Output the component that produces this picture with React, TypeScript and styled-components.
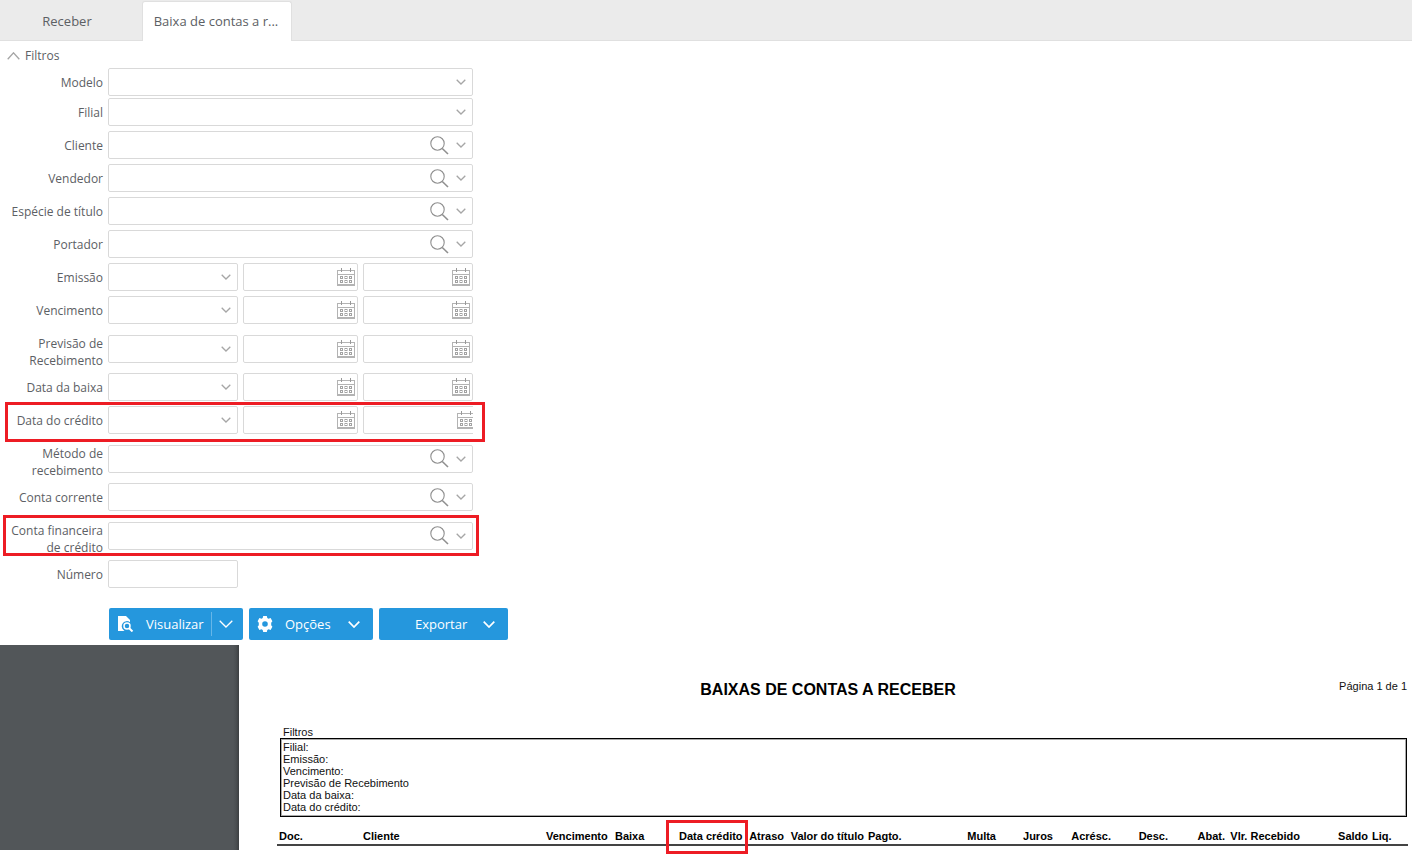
import React from 'react';
import styled, { createGlobalStyle, css } from 'styled-components';

const GlobalStyle = createGlobalStyle`
  * { box-sizing: border-box; }
  body { margin: 0; background: #fff; }
  body, button, input, select {
    font-family: "Open Sans", "Noto Sans", sans-serif;
    font-size: 13px;
    line-height: 17px;
    color: #5c6064;
  }
  button { border: 0; padding: 0; background: none; cursor: pointer; }
`;

const Page = styled.div`
  min-height: 100vh;
`;

const TabBar = styled.nav`
  display: flex;
  align-items: flex-end;
  height: 41px;
  background: #ebebeb;
  border-bottom: 1px solid #e0e0e0;
`;

const Tab = styled.button<{ $active?: boolean }>`
  height: 38px;
  width: 142px;
  padding-right: 8px;
  white-space: nowrap;
  ${p => p.$active && css`
    width: 150px;
    height: 40px;
    padding: 0 2px 0 0;
    margin-bottom: -1px;
    background: #fff;
    border: 1px solid #e0e0e0;
    border-bottom: 0;
    border-radius: 3px 3px 0 0;
  `}
`;

const Toggle = styled.button`
  display: flex;
  align-items: center;
  gap: 5px;
  margin: 6px 0 4px 7px;
  font-size: 12px;
`;

const Form = styled.form`
  display: flex;
  flex-direction: column;
  gap: 5px;
`;

const Row = styled.div<{ $tight?: boolean }>`
  position: relative;
  display: grid;
  grid-template-columns: 103px 365px;
  column-gap: 5px;
  align-items: center;
  margin-bottom: ${p => (p.$tight ? '-3px' : '0')};
`;

const Label = styled.label`
  align-self: start;
  padding-top: 6px;
  margin-bottom: -1px;
  font-size: 12px;
  text-align: right;
`;

const Controls = styled.div`
  display: flex;
  gap: 5px;
  overflow: hidden;
`;

const Box = styled.div<{ $w?: number }>`
  position: relative;
  display: flex;
  align-items: center;
  flex: ${p => (p.$w ? `0 0 ${p.$w}px` : '1 1 auto')};
  min-width: 0;
  height: 28px;
  background: #fff;
  border: 1px solid #d9d9d9;
  border-radius: 2px;
`;

const Select = styled.select`
  width: 100%;
  height: 26px;
  padding: 0 28px 0 8px;
  border: 0;
  background: transparent;
  appearance: none;
  outline: none;
`;

const Input = styled.input`
  flex: 1;
  width: 100%;
  min-width: 0;
  height: 26px;
  padding: 0 8px;
  border: 0;
  background: transparent;
  outline: none;
`;

const SelectArrow = styled.span`
  position: absolute;
  right: 6px;
  display: flex;
  pointer-events: none;
`;

const IconButton = styled.button<{ $gap: number }>`
  display: flex;
  flex: none;
  margin-right: ${p => p.$gap}px;
`;

const Mark = styled.span<{ $t: number; $b: number; $l: number; $w?: number; $r?: number }>`
  position: absolute;
  top: ${p => p.$t}px;
  bottom: ${p => p.$b}px;
  left: ${p => p.$l}px;
  ${p => p.$w !== undefined && `width: ${p.$w}px;`}
  ${p => p.$r !== undefined && `right: ${p.$r}px;`}
  border: 3px solid #ed1c24;
  pointer-events: none;
  z-index: 1;
`;

const Actions = styled.div`
  display: flex;
  gap: 6px;
  margin: 20px 0 5px 109px;
`;

const ActionGroup = styled.div`
  display: flex;
  align-items: center;
  height: 32px;
  background: #2597dd;
  border-radius: 2px;
`;

const ActionButton = styled.button<{ $w: number; $pad?: number }>`
  display: flex;
  align-items: center;
  width: ${p => p.$w}px;
  height: 32px;
  padding-left: ${p => p.$pad ?? 8}px;
  color: #fff;
  svg:last-child:not(:first-child) { margin: 0 13px 0 auto; }
`;

const ActionText = styled.span`
  margin-left: 12px;
`;

const SplitArrow = styled.button`
  display: flex;
  align-items: center;
  justify-content: center;
  width: 32px;
  height: 24px;
  padding-right: 3px;
  border-left: 1px solid #66b6e8;
`;

const Viewer = styled.section`
  display: grid;
  grid-template-columns: 239px 1fr;
  font-family: "Liberation Sans", Arial, sans-serif;
  font-size: 11px;
  line-height: 12px;
  color: #111;
`;

const Backdrop = styled.div`
  background: linear-gradient(to left, #3c3f41 0, #4b4f52 3px, #525659 6px);
`;

const Paper = styled.article`
  padding: 35px 4px 4px 0;
`;

const PaperHead = styled.header`
  display: grid;
  grid-template-columns: 1fr auto 1fr;
  padding: 0 1px 0 10px;
`;

const Title = styled.h1`
  grid-column: 2;
  margin: 0;
  font-size: 16px;
  line-height: 20px;
  color: #000;
`;

const PageNumber = styled.span`
  text-align: right;
`;

const FilterTitle = styled.h2`
  margin: 26px 0 0 44px;
  font-size: 11px;
  font-weight: 400;
  line-height: 12px;
`;

const FilterBox = styled.ul`
  margin: 0 1px 0 41px;
  padding: 2px 2px 3px;
  min-height: 78px;
  list-style: none;
  border: 1px solid #000;
  box-shadow: inset 0 0 0 1px #aaa;
`;

const Table = styled.table`
  width: calc(100% - 38px);
  margin: 12px 0 0 38px;
  border-collapse: collapse;
  table-layout: fixed;
`;

const Th = styled.th<{ $w: number; $right?: boolean }>`
  position: relative;
  width: ${p => p.$w}px;
  padding: 1px 2px 2px;
  text-align: ${p => (p.$right ? 'right' : 'left')};
  white-space: nowrap;
  color: #000;
  border-bottom: 2px solid #444;
`;

const Chevron = ({ up, w = 10, h = 6, color = '#a6a6a6', stroke = 1.3 }: { up?: boolean; w?: number; h?: number; color?: string; stroke?: number }) => (
  <svg width={w} height={h} fill="none" stroke={color} strokeWidth={stroke} aria-hidden="true">
    <path d={up ? `M.7 ${h - 0.7}L${w / 2} .8L${w - 0.7} ${h - 0.7}` : `M.7 .7L${w / 2} ${h - 1}L${w - 0.7} .7`} />
  </svg>
);

const SearchIcon = () => (
  <svg width="19" height="19" fill="none" stroke="#8f8f8f" aria-hidden="true">
    <circle cx="7.5" cy="7.5" r="6.7" strokeWidth="1.1" />
    <path d="M12.3 12.5L18 18" strokeWidth="1.6" />
  </svg>
);

const CalendarIcon = () => (
  <svg width="18" height="18" fill="none" stroke="#b3b3b3" aria-hidden="true">
    <path d="M.5 2V17M17.5 2V17M0 2.500H18M0 6.500H18" />
    <path d="M0 17H18" strokeWidth="2" />
    <path d="M4.500 0V4M13.500 0V4" stroke="#999" />
    {[3.5, 8, 12.5].map(x => [8.5, 12.5].map(y => (
      <rect key={`${x}-${y}`} x={x} y={y} width="2" height="2" stroke="#a2a2a2" />
    )))}
  </svg>
);

const PreviewIcon = () => (
  <svg width="17" height="16" aria-hidden="true">
    <path fill="#fff" fillRule="evenodd" d="M1 0h8l4 4v2.300A4.800 4.800 0 0 0 6.500 14l1 1H1z" />
    <circle cx="10" cy="10" r="3" fill="none" stroke="#fff" strokeWidth="1.500" />
    <path d="M12 12L15.500 15.500" stroke="#fff" strokeWidth="2" />
  </svg>
);

const GearIcon = () => (
  <svg width="16" height="16" viewBox="0 0 16 16" aria-hidden="true">
    <path
      fill="#fff"
      fillRule="evenodd"
      d="M6.200 0h3.600l.5 2.100 1.200.7 2.100-.7 1.800 3.100-1.200 1.500v2.600l1.200 1.500-1.800 3.100-2.100-.7-1.200.7-.5 2.100H6.200l-.5-2.100-1.200-.7-2.100.7L.6 10.800l1.200-1.500V6.700L.6 5.200l1.800-3.100 2.100.7 1.200-.7zM8 5.200a2.800 2.800 0 1 0 0 5.600 2.800 2.800 0 0 0 0-5.600z"
    />
  </svg>
);

const SelectBox = ({ id, label, width }: { id?: string; label?: string; width?: number }) => (
  <Box $w={width}>
    <Select id={id} aria-label={label} />
    <SelectArrow><Chevron /></SelectArrow>
  </Box>
);

const SearchBox = ({ id }: { id: string }) => (
  <Box>
    <Input id={id} />
    <IconButton type="button" aria-label="Pesquisar" $gap={7}><SearchIcon /></IconButton>
    <IconButton type="button" aria-label="Abrir lista" $gap={6}><Chevron /></IconButton>
  </Box>
);

const DateBox = ({ label, width }: { label: string; width: number }) => (
  <Box $w={width}>
    <Input aria-label={label} />
    <IconButton type="button" aria-label="Calendário" $gap={2}><CalendarIcon /></IconButton>
  </Box>
);

type Kind = 'select' | 'search' | 'period' | 'text';
interface Field { id: string; label: string; kind: Kind; tight?: boolean; wide?: boolean; mark?: [number, number, number, number] }

const fields: Field[] = [
  { id: 'modelo', label: 'Modelo', kind: 'select', tight: true },
  { id: 'filial', label: 'Filial', kind: 'select' },
  { id: 'cliente', label: 'Cliente', kind: 'search' },
  { id: 'vendedor', label: 'Vendedor', kind: 'search' },
  { id: 'especie', label: 'Espécie de título', kind: 'search' },
  { id: 'portador', label: 'Portador', kind: 'search' },
  { id: 'emissao', label: 'Emissão', kind: 'period' },
  { id: 'vencimento', label: 'Vencimento', kind: 'period' },
  { id: 'previsao', label: 'Previsão de Recebimento', kind: 'period' },
  { id: 'baixa', label: 'Data da baixa', kind: 'period' },
  { id: 'credito', label: 'Data do crédito', kind: 'period', wide: true, mark: [-4, -8, 5, 480] },
  { id: 'metodo', label: 'Método de recebimento', kind: 'search' },
  { id: 'conta', label: 'Conta corrente', kind: 'search' },
  { id: 'financeira', label: 'Conta financeira de crédito', kind: 'search', mark: [-1, -1, 3, 476] },
  { id: 'numero', label: 'Número', kind: 'text' },
];

const FieldRow = ({ field }: { field: Field }) => (
  <Row $tight={field.tight}>
    <Label htmlFor={field.id}>{field.label}</Label>
    <Controls>
      {field.kind === 'select' && <SelectBox id={field.id} />}
      {field.kind === 'search' && <SearchBox id={field.id} />}
      {field.kind === 'text' && <Box $w={130}><Input id={field.id} /></Box>}
      {field.kind === 'period' && (
        <>
          <SelectBox id={field.id} width={130} />
          <DateBox label={`${field.label} inicial`} width={115} />
          <DateBox label={`${field.label} final`} width={field.wide ? 115 : 110} />
        </>
      )}
    </Controls>
    {field.mark && <Mark $t={field.mark[0]} $b={field.mark[1]} $l={field.mark[2]} $w={field.mark[3]} />}
  </Row>
);

const reportFilters = ['Filial:', 'Emissão:', 'Vencimento:', 'Previsão de Recebimento', 'Data da baixa:', 'Data do crédito:'];

const columns: { name: string; w: number; right?: boolean; marked?: boolean }[] = [
  { name: 'Doc.', w: 84 },
  { name: 'Cliente', w: 183 },
  { name: 'Vencimento', w: 69 },
  { name: 'Baixa', w: 64 },
  { name: 'Data crédito', w: 66, right: true, marked: true },
  { name: 'Atraso', w: 43, right: true },
  { name: 'Valor do título', w: 80, right: true },
  { name: 'Pagto.', w: 75 },
  { name: 'Multa', w: 57, right: true },
  { name: 'Juros', w: 57, right: true },
  { name: 'Acrésc.', w: 58, right: true },
  { name: 'Desc.', w: 57, right: true },
  { name: 'Abat.', w: 57, right: true },
  { name: 'Vlr. Recebido', w: 75, right: true },
  { name: 'Saldo', w: 68, right: true },
  { name: 'Liq.', w: 38 },
];

export default function App() {
  return (
    <Page>
      <GlobalStyle />
      <TabBar>
        <Tab type="button">Receber</Tab>
        <Tab type="button" $active>Baixa de contas a r...</Tab>
      </TabBar>
      <main>
        <Toggle type="button"><Chevron up w={13} h={8} /> Filtros</Toggle>
        <Form>
          {fields.map(f => <FieldRow key={f.id} field={f} />)}
        </Form>
        <Actions>
          <ActionGroup>
            <ActionButton type="button" $w={102}><PreviewIcon /><ActionText>Visualizar</ActionText></ActionButton>
            <SplitArrow type="button" aria-label="Mais opções de visualização">
              <Chevron w={14} h={8} color="#fff" stroke={1.3} />
            </SplitArrow>
          </ActionGroup>
          <ActionGroup>
            <ActionButton type="button" $w={124}>
              <GearIcon /><ActionText>Opções</ActionText><Chevron w={12} h={7} color="#fff" stroke={1.7} />
            </ActionButton>
          </ActionGroup>
          <ActionGroup>
            <ActionButton type="button" $w={129} $pad={24}>
              <ActionText>Exportar</ActionText><Chevron w={12} h={7} color="#fff" stroke={1.7} />
            </ActionButton>
          </ActionGroup>
        </Actions>
        <Viewer>
          <Backdrop />
          <Paper>
            <PaperHead>
              <Title>BAIXAS DE CONTAS A RECEBER</Title>
              <PageNumber>Página 1 de 1</PageNumber>
            </PaperHead>
            <FilterTitle>Filtros</FilterTitle>
            <FilterBox>
              {reportFilters.map(f => <li key={f}>{f}</li>)}
            </FilterBox>
            <Table>
              <thead>
                <tr>
                  {columns.map(c => (
                    <Th key={c.name} scope="col" $w={c.w} $right={c.right}>
                      {c.name}
                      {c.marked && <Mark $t={-9} $b={-10} $l={-11} $r={-5} />}
                    </Th>
                  ))}
                </tr>
              </thead>
            </Table>
          </Paper>
        </Viewer>
      </main>
    </Page>
  );
}
